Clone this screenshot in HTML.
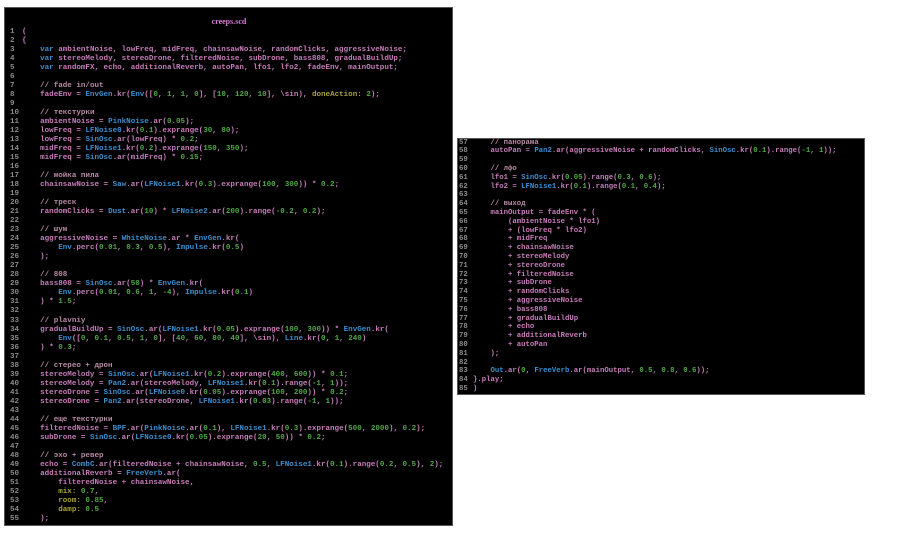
<!DOCTYPE html>
<html><head><meta charset="utf-8"><style>
body{margin:0;background:#fff;width:900px;height:535px;position:relative;overflow:hidden}
.p{position:absolute;background:#000;border:1px solid #555}
pre{position:absolute;margin:0;font-family:"Liberation Mono","DejaVu Sans Mono",monospace;font-weight:bold;color:#c77cbb;white-space:pre}
.L{font-size:7.55px;line-height:9.02px}
.R{font-size:7.3px;line-height:8.79px}
.num{color:#8a8a8a}
b{color:#3a8fd0;font-weight:bold}
i{color:#4fa844;font-style:normal}
u{color:#aaa23a;text-decoration:none}
s{color:#bb8aa6;text-decoration:none}
.t{position:absolute;left:0;width:448px;top:9px;text-align:center;font:bold 8px "Liberation Serif",serif;color:#d878d8}
</style></head><body>
<div class="p" style="left:4px;top:7px;width:447px;height:517px">
<div class="t">creeps.scd</div>
</div>
<pre class="L num" style="left:10px;top:28px">1
2
3
4
5
6
7
8
9
10
11
12
13
14
15
16
17
18
19
20
21
22
23
24
25
26
27
28
29
30
31
32
33
34
35
36
37
38
39
40
41
42
43
44
45
46
47
48
49
50
51
52
53
54
55</pre>
<pre class="L" style="left:22px;top:28px">(
{
    <b>var</b> ambientNoise, lowFreq, midFreq, chainsawNoise, randomClicks, aggressiveNoise;
    <b>var</b> stereoMelody, stereoDrone, filteredNoise, subDrone, bass808, gradualBuildUp;
    <b>var</b> randomFX, echo, additionalReverb, autoPan, lfo1, lfo2, fadeEnv, mainOutput;

    <s>// fade in/out</s>
    fadeEnv = <b>EnvGen</b>.kr(<b>Env</b>([<i>0</i>, <i>1</i>, <i>1</i>, <i>0</i>], [<i>10</i>, <i>120</i>, <i>10</i>], \sin), <u>doneAction:</u> <i>2</i>);

    <s>// текстурки</s>
    ambientNoise = <b>PinkNoise</b>.ar(<i>0.05</i>);
    lowFreq = <b>LFNoise0</b>.kr(<i>0.1</i>).exprange(<i>30</i>, <i>80</i>);
    lowFreq = <b>SinOsc</b>.ar(lowFreq) * <i>0.2</i>;
    midFreq = <b>LFNoise1</b>.kr(<i>0.2</i>).exprange(<i>150</i>, <i>350</i>);
    midFreq = <b>SinOsc</b>.ar(midFreq) * <i>0.15</i>;

    <s>// мойка пила</s>
    chainsawNoise = <b>Saw</b>.ar(<b>LFNoise1</b>.kr(<i>0.3</i>).exprange(<i>100</i>, <i>300</i>)) * <i>0.2</i>;

    <s>// треск</s>
    randomClicks = <b>Dust</b>.ar(<i>10</i>) * <b>LFNoise2</b>.ar(<i>200</i>).range(<i>-0.2</i>, <i>0.2</i>);

    <s>// шум</s>
    aggressiveNoise = <b>WhiteNoise</b>.ar * <b>EnvGen</b>.kr(
        <b>Env</b>.perc(<i>0.01</i>, <i>0.3</i>, <i>0.5</i>), <b>Impulse</b>.kr(<i>0.5</i>)
    );

    <s>// 808</s>
    bass808 = <b>SinOsc</b>.ar(<i>50</i>) * <b>EnvGen</b>.kr(
        <b>Env</b>.perc(<i>0.01</i>, <i>0.6</i>, <i>1</i>, <i>-4</i>), <b>Impulse</b>.kr(<i>0.1</i>)
    ) * <i>1.5</i>;

    <s>// plavniy</s>
    gradualBuildUp = <b>SinOsc</b>.ar(<b>LFNoise1</b>.kr(<i>0.05</i>).exprange(<i>100</i>, <i>300</i>)) * <b>EnvGen</b>.kr(
        <b>Env</b>([<i>0</i>, <i>0.1</i>, <i>0.5</i>, <i>1</i>, <i>0</i>], [<i>40</i>, <i>60</i>, <i>80</i>, <i>40</i>], \sin), <b>Line</b>.kr(<i>0</i>, <i>1</i>, <i>240</i>)
    ) * <i>0.3</i>;

    <s>// стерео + дрон</s>
    stereoMelody = <b>SinOsc</b>.ar(<b>LFNoise1</b>.kr(<i>0.2</i>).exprange(<i>400</i>, <i>600</i>)) * <i>0.1</i>;
    stereoMelody = <b>Pan2</b>.ar(stereoMelody, <b>LFNoise1</b>.kr(<i>0.1</i>).range(<i>-1</i>, <i>1</i>));
    stereoDrone = <b>SinOsc</b>.ar(<b>LFNoise0</b>.kr(<i>0.05</i>).exprange(<i>100</i>, <i>200</i>)) * <i>0.2</i>;
    stereoDrone = <b>Pan2</b>.ar(stereoDrone, <b>LFNoise1</b>.kr(<i>0.03</i>).range(<i>-1</i>, <i>1</i>));

    <s>// еще текстурки</s>
    filteredNoise = <b>BPF</b>.ar(<b>PinkNoise</b>.ar(<i>0.1</i>), <b>LFNoise1</b>.kr(<i>0.3</i>).exprange(<i>500</i>, <i>2000</i>), <i>0.2</i>);
    subDrone = <b>SinOsc</b>.ar(<b>LFNoise0</b>.kr(<i>0.05</i>).exprange(<i>20</i>, <i>50</i>)) * <i>0.2</i>;

    <s>// эхо + ревер</s>
    echo = <b>CombC</b>.ar(filteredNoise + chainsawNoise, <i>0.5</i>, <b>LFNoise1</b>.kr(<i>0.1</i>).range(<i>0.2</i>, <i>0.5</i>), <i>2</i>);
    additionalReverb = <b>FreeVerb</b>.ar(
        filteredNoise + chainsawNoise,
        <u>mix:</u> <i>0.7</i>,
        <u>room:</u> <i>0.85</i>,
        <u>damp:</u> <i>0.5</i>
    );</pre>
<div class="p" style="left:457px;top:138px;width:406px;height:255px"></div>
<pre class="R num" style="left:459px;top:138.6px">57
58
59
60
61
62
63
64
65
66
67
68
69
70
71
72
73
74
75
76
77
78
79
80
81
82
83
84
85</pre>
<pre class="R" style="left:473px;top:138.6px">    <s>// панорама</s>
    autoPan = <b>Pan2</b>.ar(aggressiveNoise + randomClicks, <b>SinOsc</b>.kr(<i>0.1</i>).range(<i>-1</i>, <i>1</i>));

    <s>// лфо</s>
    lfo1 = <b>SinOsc</b>.kr(<i>0.05</i>).range(<i>0.3</i>, <i>0.6</i>);
    lfo2 = <b>LFNoise1</b>.kr(<i>0.1</i>).range(<i>0.1</i>, <i>0.4</i>);

    <s>// выход</s>
    mainOutput = fadeEnv * (
        (ambientNoise * lfo1)
        + (lowFreq * lfo2)
        + midFreq
        + chainsawNoise
        + stereoMelody
        + stereoDrone
        + filteredNoise
        + subDrone
        + randomClicks
        + aggressiveNoise
        + bass808
        + gradualBuildUp
        + echo
        + additionalReverb
        + autoPan
    );

    <b>Out</b>.ar(<i>0</i>, <b>FreeVerb</b>.ar(mainOutput, <i>0.5</i>, <i>0.8</i>, <i>0.6</i>));
}.play;
)</pre>
</body></html>
